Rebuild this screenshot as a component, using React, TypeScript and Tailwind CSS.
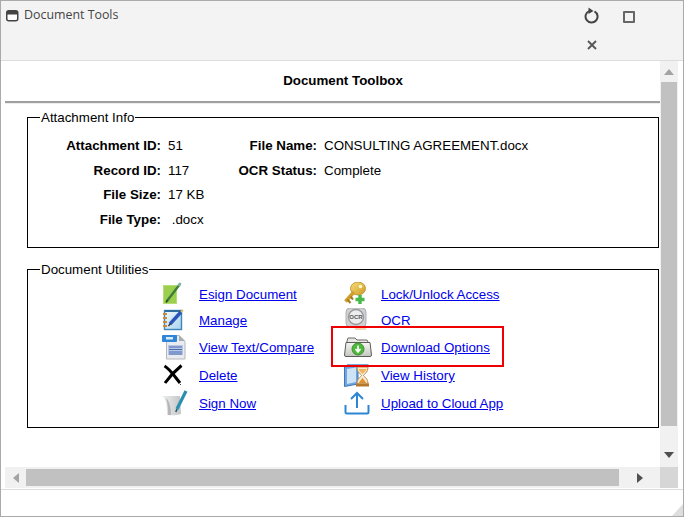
import React from "react";

const EsignIcon = () => (
  <svg width="24" height="24" viewBox="0 1 24 24">
    <rect x="1" y="4" width="14" height="19" fill="#9dcf4e" />
    <rect x="1.5" y="4.5" width="13" height="18" fill="none" stroke="#b6dc74" strokeWidth="1" />
    <path d="M5 20 L18 3" stroke="#3f7d3a" strokeWidth="2.4" />
    <path d="M16.5 5 L18.6 2" stroke="#7fb8a0" strokeWidth="2.4" />
    <path d="M4 21.5 L5.6 19" stroke="#24451f" strokeWidth="1.4" />
  </svg>
);

const ManageIcon = () => (
  <svg width="24" height="24" viewBox="0 0 24 24">
    <defs>
      <linearGradient id="pad" x1="0" y1="0" x2="1" y2="1">
        <stop offset="0" stopColor="#f4fafe" />
        <stop offset="1" stopColor="#a9d3ee" />
      </linearGradient>
    </defs>
    <rect x="2.5" y="2.5" width="17" height="19" fill="url(#pad)" stroke="#3f86b8" strokeWidth="1.4" />
    <path d="M3 2 H20 V4 H3 Z" fill="#2f6f9f" />
    <path d="M1 6 H5 M1 10 H5 M1 14 H5 M1 18 H5" stroke="#d08a32" strokeWidth="1.8" />
    <path d="M8 16 L19 4" stroke="#2a56b8" strokeWidth="3.4" />
    <path d="M19 4 L21 2" stroke="#e0c060" strokeWidth="2" />
    <path d="M6.5 18 L8.5 15.5" stroke="#333" strokeWidth="1.3" />
  </svg>
);

const TextIcon = () => (
  <svg width="24" height="26" viewBox="0 0 24 26">
    <path d="M4.5 1.5 H17 L23 7.5 V25 H4.5 Z" fill="#e9ebf1" stroke="#b4b6ba" strokeWidth="1" />
    <path d="M17 1 L23 7 H17 Z" fill="#a9acb3" />
    <rect x="0" y="1" width="15" height="7" rx="1" fill="#2f86d6" />
    <rect x="4" y="3" width="7" height="2.5" fill="#d8ecfb" />
    <rect x="6" y="11" width="15" height="10" fill="#b8c7e6" />
    <path d="M7 13 H20 M7 15.5 H20 M7 18 H20 M7 20 H20" stroke="#4a6bb0" strokeWidth="1" />
  </svg>
);

const DeleteIcon = () => (
  <svg width="24" height="22" viewBox="0 0 24 22">
    <path d="M2.5 2 C8 5 13 13 18 19" stroke="#000" strokeWidth="3" fill="none" />
    <path d="M19.5 1.5 C14 6 8 12 3 19" stroke="#000" strokeWidth="3" fill="none" />
    <rect x="18" y="20" width="1" height="1" fill="#444" />
  </svg>
);

const SignIcon = () => (
  <svg width="26" height="26" viewBox="0 0 26 26">
    <defs>
      <linearGradient id="scroll" x1="0" y1="0" x2="1" y2="0">
        <stop offset="0" stopColor="#eef0f0" />
        <stop offset="1" stopColor="#c3c5c7" />
      </linearGradient>
    </defs>
    <path d="M0 6 L18 6 L19 24 C15 25.5 9 25.5 5 25 C5 17 5 10 0 6 Z" fill="url(#scroll)" />
    <path d="M4 8 C6 14 6 20 6 25 H9 C9 18 8 12 4 8 Z" fill="#b4b6b8" />
    <path d="M15 19 L24 1" stroke="#2d8fae" strokeWidth="3.2" />
    <path d="M13.8 22 L15 19" stroke="#1a5f74" strokeWidth="1.6" />
  </svg>
);

const KeyIcon = () => (
  <svg width="24" height="24" viewBox="0 1 24 24">
    <defs>
      <linearGradient id="gold" x1="0" y1="0" x2="1" y2="1">
        <stop offset="0" stopColor="#f8dc74" />
        <stop offset="1" stopColor="#cd9c2a" />
      </linearGradient>
    </defs>
    <ellipse cx="14" cy="7.5" rx="7.5" ry="6.5" fill="url(#gold)" stroke="#b58a22" strokeWidth="0.8" />
    <circle cx="16.5" cy="5.5" r="1.8" fill="#fff6cc" />
    <path d="M10 11 L1.5 20.5" stroke="#cf9f2e" strokeWidth="3.6" />
    <path d="M3.5 18.5 L6.5 22 M6.5 15.5 L9 18.5" stroke="#a87c1e" strokeWidth="2" />
    <path d="M16 14 V23 M11.5 18.5 H20.5" stroke="#48b948" strokeWidth="3.4" />
  </svg>
);

const OcrIcon = () => (
  <svg width="24" height="24" viewBox="0 1 24 24">
    <rect x="2" y="1" width="20" height="19" rx="4" fill="#cfd0d2" stroke="#b0b1b3" strokeWidth="1" />
    <circle cx="12" cy="10" r="7.5" fill="#eceded" stroke="#9a9b9e" strokeWidth="1.4" />
    <text x="12" y="12" fontSize="6" fontWeight="700" textAnchor="middle" fill="#555" fontFamily="Liberation Sans, sans-serif">OCR</text>
    <rect x="11" y="20" width="11" height="3" fill="#f0d9b8" />
  </svg>
);

const DownloadIcon = () => (
  <svg width="28" height="22" viewBox="0 0 28 22">
    <defs>
      <linearGradient id="fold" x1="0" y1="0" x2="0" y2="1">
        <stop offset="0" stopColor="#f6f6f4" />
        <stop offset="1" stopColor="#c4c5c0" />
      </linearGradient>
    </defs>
    <path d="M3 5 L4 2 H11 L13 4 H23 L24 6 V8 H3 Z" fill="#e8e8e4" stroke="#6b6b68" strokeWidth="1" />
    <path d="M0.5 19 L2 6.5 H26 L27.5 19 Q27.5 20.5 26 20.5 H2 Q0.5 20.5 0.5 19 Z" fill="url(#fold)" stroke="#5c5c59" strokeWidth="1" />
    <circle cx="14" cy="13" r="6" fill="#4fb83c" stroke="#3a9129" strokeWidth="1" />
    <path d="M14 9.5 V15 M11.5 13 L14 16 L16.5 13" stroke="#fff" strokeWidth="1.6" fill="none" />
  </svg>
);

const HistoryIcon = () => (
  <svg width="26" height="24" viewBox="0 0 26 24">
    <path d="M0.5 4 L14 2 V21 L0.5 23.5 Z" fill="#6ea6e0" stroke="#3f76b8" strokeWidth="1" />
    <path d="M3 6 L12 4.5 V19 L3 21 Z" fill="#cfe3f7" />
    <path d="M3 1 H24.5 V4 H3 Z" fill="#7aa6d8" />
    <path d="M13 4 H24 C24 10 20 11 19.5 12.5 C20 14 24 15 24 21 H13 C13 15 17 14 17.5 12.5 C17 11 13 10 13 4 Z" fill="#f6ead2" stroke="#c08a4a" strokeWidth="1" />
    <path d="M14.5 6 H22.5 C22 8 20 9 18.5 11 C17 9 15 8 14.5 6 Z" fill="#efb45c" />
    <path d="M14.5 20 L18.5 15 L22.5 20 Z" fill="#e0912f" />
    <path d="M12 20.5 H25 V23.5 H12 Z" fill="#b5772e" />
  </svg>
);

const UploadIcon = () => (
  <svg width="26" height="24" viewBox="0 0 26 24">
    <path d="M1.5 14 V21 Q1.5 22.5 3 22.5 H23 Q24.5 22.5 24.5 21 V14" stroke="#2c86d4" strokeWidth="2" fill="none" />
    <path d="M13 17 V2 M7 8 L13 2 L19 8" stroke="#2c86d4" strokeWidth="2" fill="none" />
  </svg>
);

const info: [string, string, string?, string?][] = [
  ["Attachment ID:", "51", "File Name:", "CONSULTING AGREEMENT.docx"],
  ["Record ID:", "117", "OCR Status:", "Complete"],
  ["File Size:", "17 KB"],
  ["File Type:", "\u00a0.docx"],
];

const utilities: [React.ReactNode, string, React.ReactNode, string][] = [
  [<EsignIcon />, "Esign Document", <KeyIcon />, "Lock/Unlock Access"],
  [<ManageIcon />, "Manage", <OcrIcon />, "OCR"],
  [<TextIcon />, "View Text/Compare", <DownloadIcon />, "Download Options"],
  [<DeleteIcon />, "Delete", <HistoryIcon />, "View History"],
  [<SignIcon />, "Sign Now", <UploadIcon />, "Upload to Cloud App"],
];

const UtilityLink = ({ icon, label }: { icon: React.ReactNode; label: string }) => (
  <div className="flex items-center">
    <span className="flex w-[37px] shrink-0 items-center">{icon}</span>
    <a href="#" className="mt-[2px] whitespace-nowrap text-[#0000ee] underline">
      {label}
    </a>
  </div>
);

export default function App() {
  return (
    <div className="flex h-[517px] w-[684px] flex-col overflow-hidden border border-[#aaaaaa] bg-white font-['Liberation_Sans',Arial,sans-serif] text-[13.33px] text-black">
      <div className="flex h-[60px] shrink-0 items-start justify-between border-b border-[#dddddd] bg-[#f3f3f3]">
        <div className="flex items-center pl-[5px] pt-[5px] font-['Open_Sans',sans-serif] text-[12.4px] text-[#444444]">
          <svg width="13" height="12" viewBox="0 0 13 12" className="mr-[5px] mt-[2px]">
            <rect x="0.75" y="0.75" width="11" height="10" rx="2" fill="#fff" stroke="#444" strokeWidth="1.5" />
            <rect x="1" y="1" width="10.5" height="3.5" fill="#444" />
          </svg>
          Document Tools
        </div>
        <div className="mr-[36px] flex w-[74px] flex-wrap">
          <button className="flex h-[29px] w-[37px] items-center justify-center pl-px pt-[1px]">
            <svg width="16" height="18" viewBox="0 0 16 18" fill="none">
              <path d="M10.5 4.3 A6 6 0 1 1 5 4.1" stroke="#444" strokeWidth="2" />
              <path d="M4.5 0.5 L9.5 4 L4.5 7 Z" fill="#444" />
            </svg>
          </button>
          <button className="flex h-[29px] w-[37px] items-center justify-center pt-[3px]">
            <span className="block h-[12px] w-[12px] rounded-[1px] border-2 border-[#666666]" />
          </button>
          <button className="flex h-[29px] w-[37px] items-center justify-center">
            <svg width="10" height="10" viewBox="0 0 10 10">
              <path d="M1 1 L9 9 M9 1 L1 9" stroke="#555" strokeWidth="1.8" />
            </svg>
          </button>
        </div>
      </div>

      <div className="flex min-h-0 flex-1 pl-[4px] pr-[5px]">
        <div className="min-w-0 flex-1 overflow-hidden">
          <div className="w-[676px]">
            <h1 className="py-[12px] text-center font-bold leading-[16px]">Document Toolbox</h1>
            <hr className="h-[3px] border-t-2 border-b border-[#a0a0a0] border-b-[#eeeeee]" />

            <fieldset className="ml-[22px] mt-[4px] w-[632px] border border-black pb-[15px] pt-[7px]">
              <legend className="ml-[12px] px-px pt-[2px] leading-[16px]">Attachment Info</legend>
              <div className="grid grid-cols-[133px_50px_92px_1fr] grid-rows-[25px_25px_24px_25px] items-center gap-x-[7px]">
                {info.map(([label, value, label2, value2]) => (
                  <React.Fragment key={label}>
                    <span className="text-right font-bold">{label}</span>
                    <span>{value}</span>
                    <span className="whitespace-nowrap text-right font-bold">{label2}</span>
                    <span>{value2}</span>
                  </React.Fragment>
                ))}
              </div>
            </fieldset>

            <fieldset className="ml-[22px] mt-[12px] w-[632px] border border-black pb-[10px] pt-[3px]">
              <legend className="ml-[12px] px-px pt-[2px] leading-[16px]">Document Utilities</legend>
              <div className="ml-[134px] grid grid-cols-[182px_1fr] grid-rows-[26px_26px_28px_28px_28px] items-center">
                {utilities.map(([icon, label, icon2, label2]) => (
                  <React.Fragment key={label}>
                    <UtilityLink icon={icon} label={label} />
                    <UtilityLink icon={icon2} label={label2} />
                  </React.Fragment>
                ))}
              </div>
            </fieldset>
          </div>
        </div>

        <div className="flex w-[18px] shrink-0 flex-col bg-[#f1f1f1]">
          <div className="flex h-[21px] items-center justify-center pt-[1px]">
            <svg width="10" height="6" viewBox="0 0 10 6">
              <path d="M5 0 L10 6 H0 Z" fill="#a3a3a3" />
            </svg>
          </div>
          <div className="mx-px h-[344px] bg-[#c1c1c1]" />
          <div className="flex flex-1 items-center justify-center pt-[16px]">
            <svg width="10" height="6" viewBox="0 0 10 6">
              <path d="M0 0 H10 L5 6 Z" fill="#505050" />
            </svg>
          </div>
        </div>
      </div>

      <div className="flex h-[21px] shrink-0 pl-[4px] pr-[5px]">
        <div className="flex flex-1 items-center bg-[#f1f1f1]">
          <div className="flex w-[21px] justify-center">
            <svg width="6" height="10" viewBox="0 0 6 10">
              <path d="M6 0 V10 L0 5 Z" fill="#a3a3a3" />
            </svg>
          </div>
          <div className="h-[17px] w-[593px] bg-[#c1c1c1]" />
          <div className="flex flex-1 justify-center">
            <svg width="6" height="10" viewBox="0 0 6 10">
              <path d="M0 0 V10 L6 5 Z" fill="#505050" />
            </svg>
          </div>
        </div>
        <div className="w-[18px] bg-[#d6d6d6]" />
      </div>

      <div className="relative mt-px h-[27px] shrink-0 border-t border-[#dddddd]">
        <svg width="11" height="12" viewBox="0 0 11 12" className="absolute bottom-0 right-0">
          <path d="M11 0 V12 H0 Z" fill="#dedede" />
        </svg>
      </div>

      {/* red callout sits on top of the screenshot */}
      <div className="absolute left-[331px] top-[326px] h-[41px] w-[173px] border-2 border-[#ee0000]" />
    </div>
  );
}
